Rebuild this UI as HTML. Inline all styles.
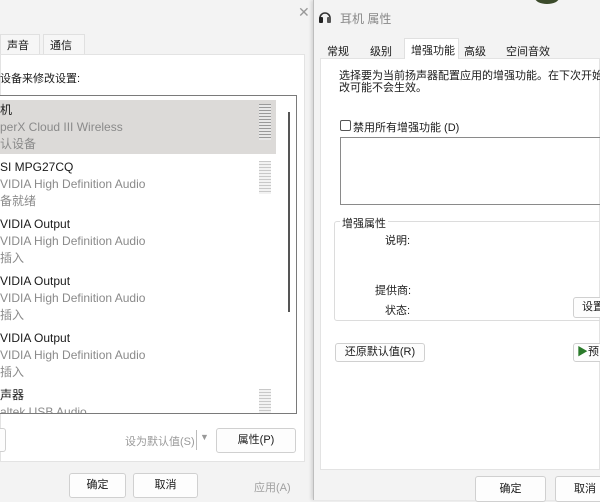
<!DOCTYPE html>
<html><head><meta charset="utf-8"><style>
*{margin:0;padding:0;box-sizing:border-box}
body{width:600px;height:500px;overflow:hidden;background:#f3f3f3;position:relative;font-family:"Liberation Sans","Noto Sans CJK SC",sans-serif;font-size:11px;color:#1a1a1a}
.a{position:absolute;white-space:nowrap}
.btn{position:absolute;background:#fdfdfd;border:1px solid #d0d0d0;border-radius:3px;text-align:center;font-size:11px}
.g{color:#8a8a8a}
.li{font-size:12px;line-height:17px}
</style></head><body>
<!-- left window -->
<div class="a" style="left:0;top:0;width:313px;height:500px;background:#f3f3f3"></div>
<div class="a" style="left:298px;top:4px;font-size:14px;color:#999">✕</div>
<div class="a" style="left:0;top:34px;width:40px;height:20px;border:1px solid #e0e0e0;border-bottom:none;background:#f6f6f6"></div>
<div class="a" style="left:43px;top:34px;width:42px;height:20px;border:1px solid #e0e0e0;border-bottom:none;background:#f6f6f6"></div>
<div class="a" style="left:7px;top:37px">声音</div>
<div class="a" style="left:50px;top:37px">通信</div>
<div class="a" style="left:0;top:54px;width:305px;height:408px;background:#fff;border:1px solid #e3e3e3"></div>
<div class="a" style="left:0;top:70px">设备来修改设置:</div>
<div class="a" style="left:-2px;top:95px;width:299px;height:319px;border:1px solid #7a7a7a;background:#fff;overflow:hidden">
 <div class="a" style="left:0;top:4px;width:277px;height:54px;background:#dcdad8"></div>
 <div class="a" style="left:289px;top:16px;width:2px;height:200px;background:#555"></div>
 <div class="a li" style="left:1px;top:6px">机<br><span class="g">perX Cloud III Wireless</span><br><span class="g">认设备</span></div>
 <div class="a li" style="left:1px;top:63px">SI MPG27CQ<br><span class="g">VIDIA High Definition Audio</span><br><span class="g">备就绪</span></div>
 <div class="a li" style="left:1px;top:120px">VIDIA Output<br><span class="g">VIDIA High Definition Audio</span><br><span class="g">插入</span></div>
 <div class="a li" style="left:1px;top:177px">VIDIA Output<br><span class="g">VIDIA High Definition Audio</span><br><span class="g">插入</span></div>
 <div class="a li" style="left:1px;top:234px">VIDIA Output<br><span class="g">VIDIA High Definition Audio</span><br><span class="g">插入</span></div>
 <div class="a li" style="left:1px;top:291px">声器<br><span class="g">altek USB Audio</span></div>
 <div class="a" style="left:260px;top:8px;width:12px;height:36px;background:repeating-linear-gradient(#9a9a9a 0 1px,#e8e8e8 1px 3px)"></div>
 <div class="a" style="left:260px;top:65px;width:12px;height:33px;background:repeating-linear-gradient(#c8c8c8 0 1px,#f2f2f2 1px 3px)"></div>
 <div class="a" style="left:260px;top:293px;width:12px;height:26px;background:repeating-linear-gradient(#c8c8c8 0 1px,#f2f2f2 1px 3px)"></div>
</div>
<div class="btn" style="left:-3px;top:428px;width:9px;height:24px"></div>
<div class="a g" style="left:125px;top:433px;color:#9a9a9a">设为默认值(S)</div>
<div class="a" style="left:196px;top:430px;width:1px;height:20px;background:#bbb"></div>
<div class="a" style="left:200px;top:432px;color:#999;font-size:9px">▼</div>
<div class="btn" style="left:216px;top:428px;width:80px;height:25px;line-height:23px">属性(P)</div>
<div class="btn" style="left:69px;top:473px;width:57px;height:25px;line-height:23px">确定</div>
<div class="btn" style="left:133px;top:473px;width:65px;height:25px;line-height:23px">取消</div>
<div class="a" style="left:254px;top:479px;color:#a0a0a0">应用(A)</div>
<!-- right window -->
<div class="a" style="left:313px;top:0;width:287px;height:500px;background:#f3f3f3;border-left:1px solid #bdbdbd;box-shadow:-2px 0 3px rgba(0,0,0,.12)"></div>
<div class="a" style="left:535px;top:-8px;width:24px;height:12px;border-radius:50%;background:#3b4a2a"></div>
<svg class="a" style="left:318px;top:9px" width="14" height="16" viewBox="0 0 14 16"><path d="M2 9 A5 5 0 0 1 12 9" fill="none" stroke="#333" stroke-width="1.6"/><rect x="1" y="8" width="4" height="6" rx="1" fill="#222"/><rect x="9" y="8" width="4" height="6" rx="1" fill="#555"/></svg>
<div class="a" style="left:340px;top:10px;color:#888;font-size:12px">耳机 属性</div>
<div class="a" style="left:320px;top:58px;width:280px;height:412px;background:#fff;border:1px solid #e3e3e3"></div>
<div class="a" style="left:404px;top:38px;width:55px;height:21px;background:#fff;border:1px solid #e0e0e0;border-bottom:none"></div>
<div class="a" style="left:327px;top:43px">常规</div>
<div class="a" style="left:370px;top:43px">级别</div>
<div class="a" style="left:411px;top:42px">增强功能</div>
<div class="a" style="left:464px;top:43px">高级</div>
<div class="a" style="left:506px;top:43px">空间音效</div>
<div class="a" style="left:339px;top:70px;line-height:12px">选择要为当前扬声器配置应用的增强功能。在下次开始播<br>改可能不会生效。</div>
<div class="a" style="left:340px;top:120px;width:11px;height:11px;border:1px solid #555;border-radius:2px"></div>
<div class="a" style="left:353px;top:119px">禁用所有增强功能 (D)</div>
<div class="a" style="left:340px;top:137px;width:262px;height:68px;border:1px solid #8a8a8a"></div>
<div class="a" style="left:334px;top:221px;width:270px;height:100px;border:1px solid #dcdcdc;border-radius:3px"></div>
<div class="a" style="left:340px;top:215px;background:#fff;padding:0 2px">增强属性</div>
<div class="a" style="left:385px;top:232px">说明:</div>
<div class="a" style="left:375px;top:282px">提供商:</div>
<div class="a" style="left:385px;top:302px">状态:</div>
<div class="btn" style="left:573px;top:297px;width:40px;height:21px;line-height:19px;text-align:left;padding-left:8px">设置</div>
<div class="btn" style="left:335px;top:343px;width:90px;height:19px;line-height:17px">还原默认值(R)</div>
<div class="btn" style="left:573px;top:343px;width:40px;height:19px;line-height:17px;text-align:left;padding-left:3px"><span style="color:#2a7a2a">▶</span>预</div>
<div class="btn" style="left:475px;top:476px;width:71px;height:26px;line-height:24px">确定</div>
<div class="btn" style="left:555px;top:476px;width:60px;height:26px;line-height:24px">取消</div>
</body></html>
